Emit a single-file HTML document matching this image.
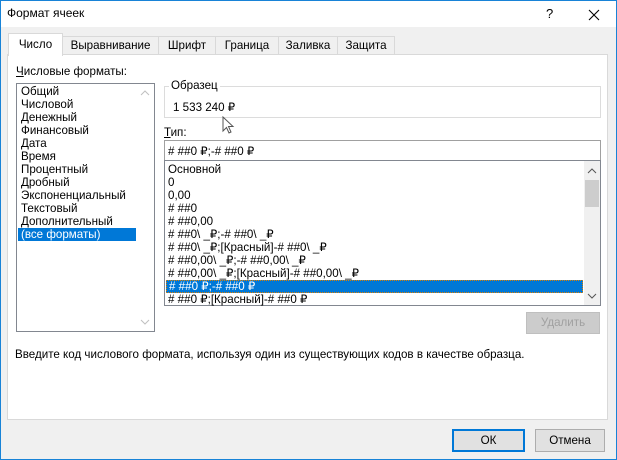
<!DOCTYPE html>
<html><head><meta charset="utf-8"><style>
*{box-sizing:border-box;margin:0;padding:0}
body{width:617px;height:460px;overflow:hidden;font-family:"Liberation Sans","DejaVu Sans",sans-serif;font-size:11.6px;color:#000;background:#1883d7;position:relative}
.win{position:absolute;left:1px;top:1px;width:615px;height:458px;background:#f0f0f0}
.title{position:absolute;left:0;top:0;width:615px;height:26px;background:#fff}
.abs{position:absolute}
.tab{position:absolute;top:35px;height:19px;border:1px solid #d9d9d9;border-bottom:none;background:#f0f0f0;text-align:center;line-height:18px}
.panel{position:absolute;left:6px;top:53px;width:601px;height:366px;background:#fff;border:1px solid #d9d9d9}
.list div{height:13px;line-height:13px;white-space:nowrap;padding-left:3px}
.sel{background:#0078d7;color:#fff}
.btn{position:absolute;border:1px solid #adadad;background:#e1e1e1;text-align:center}
</style></head><body><div class="win">
<div class="title"><div class="abs" style="left:6px;top:5px;font-size:12px">Формат ячеек</div>
<div class="abs" style="left:545px;top:5px;font-size:13px">?</div>
<svg class="abs" style="left:587px;top:8px" width="12" height="12"><path d="M1 1L11 11M11 1L1 11" stroke="#000" stroke-width="1.1"/></svg></div>
<div class="tab" style="left:61px;width:97px">Выравнивание</div>
<div class="tab" style="left:157px;width:58px">Шрифт</div>
<div class="tab" style="left:214px;width:64px">Граница</div>
<div class="tab" style="left:277px;width:60px">Заливка</div>
<div class="tab" style="left:336px;width:58px">Защита</div>
<div class="panel"></div>
<div class="tab" style="left:7px;top:32px;width:55px;height:23px;background:#fff;line-height:22px;z-index:2">Число</div>
<div class="abs" style="left:15px;top:64px"><u>Ч</u>исловые форматы:</div>
<div class="abs list" style="left:15px;top:82px;width:139px;height:249px;border:1px solid #828790;background:#fff;padding-top:1px;padding-left:1px">
<div>Общий</div><div>Числовой</div><div>Денежный</div><div>Финансовый</div><div>Дата</div><div>Время</div><div>Процентный</div><div>Дробный</div><div>Экспоненциальный</div><div>Текстовый</div><div>Дополнительный</div><div class="sel" style="width:118px">(все форматы)</div>
<svg class="abs" style="left:123px;top:6px" width="10" height="6"><path d="M1 5L5 1L9 5" stroke="#c0c0c0" fill="none"/></svg>
<svg class="abs" style="left:123px;top:235px" width="10" height="6"><path d="M1 1L5 5L9 1" stroke="#c0c0c0" fill="none"/></svg>
</div>
<div class="abs" style="left:163px;top:85px;width:437px;height:32px;border:1px solid #dcdcdc"></div>
<div class="abs" style="left:168px;top:78px;background:#fff;padding:0 2px">Образец</div>
<div class="abs" style="left:172px;top:99px">1 533 240 ₽</div>
<svg class="abs" style="left:221px;top:115px" width="14" height="20"><path d="M1 1L1 15L4.5 11.5L7 17L9 16L6.5 10.5L11 10.5Z" fill="#fff" stroke="#555"/></svg>
<div class="abs" style="left:163px;top:125px"><u>Т</u>ип:</div>
<div class="abs" style="left:163px;top:139px;width:437px;height:21px;border:1px solid #a0a0a0;background:#fff;padding:3px 0 0 3px;white-space:nowrap"># ##0 ₽;-# ##0 ₽</div>
<div class="abs list" style="left:163px;top:159px;width:437px;height:146px;border:1px solid #828790;background:#fff;padding-top:2px">
<div>Основной</div><div>0</div><div>0,00</div><div># ##0</div><div># ##0,00</div><div># ##0\ _₽;-# ##0\ _₽</div><div># ##0\ _₽;[Красный]-# ##0\ _₽</div><div># ##0,00\ _₽;-# ##0,00\ _₽</div><div># ##0,00\ _₽;[Красный]-# ##0,00\ _₽</div><div class="sel" style="width:417px;margin-left:1px;outline:1px dotted #e08000;outline-offset:-1px"># ##0 ₽;-# ##0 ₽</div><div># ##0 ₽;[Красный]-# ##0 ₽</div>
<div class="abs" style="left:419px;top:0;width:16px;height:144px;background:#f0f0f0"></div>
<div class="abs" style="left:420px;top:19px;width:14px;height:27px;background:#cdcdcd"></div>
<svg class="abs" style="left:422px;top:7px" width="10" height="6"><path d="M1 5L5 1L9 5" stroke="#555" fill="none"/></svg>
<svg class="abs" style="left:422px;top:132px" width="10" height="6"><path d="M1 1L5 5L9 1" stroke="#555" fill="none"/></svg>
</div>
<div class="btn" style="left:525px;top:311px;width:74px;height:22px;border-color:#bfbfbf;background:#cccccc;color:#a0a0a0;line-height:20px">Удалить</div>
<div class="abs" style="left:14px;top:347px;white-space:nowrap">Введите код числового формата, используя один из существующих кодов в качестве образца.</div>
<div class="btn" style="left:451px;top:428px;width:73px;height:23px;border:2px solid #0078d7;line-height:19px">ОК</div>
<div class="btn" style="left:534px;top:428px;width:70px;height:23px;line-height:21px">Отмена</div>
</div></body></html>
